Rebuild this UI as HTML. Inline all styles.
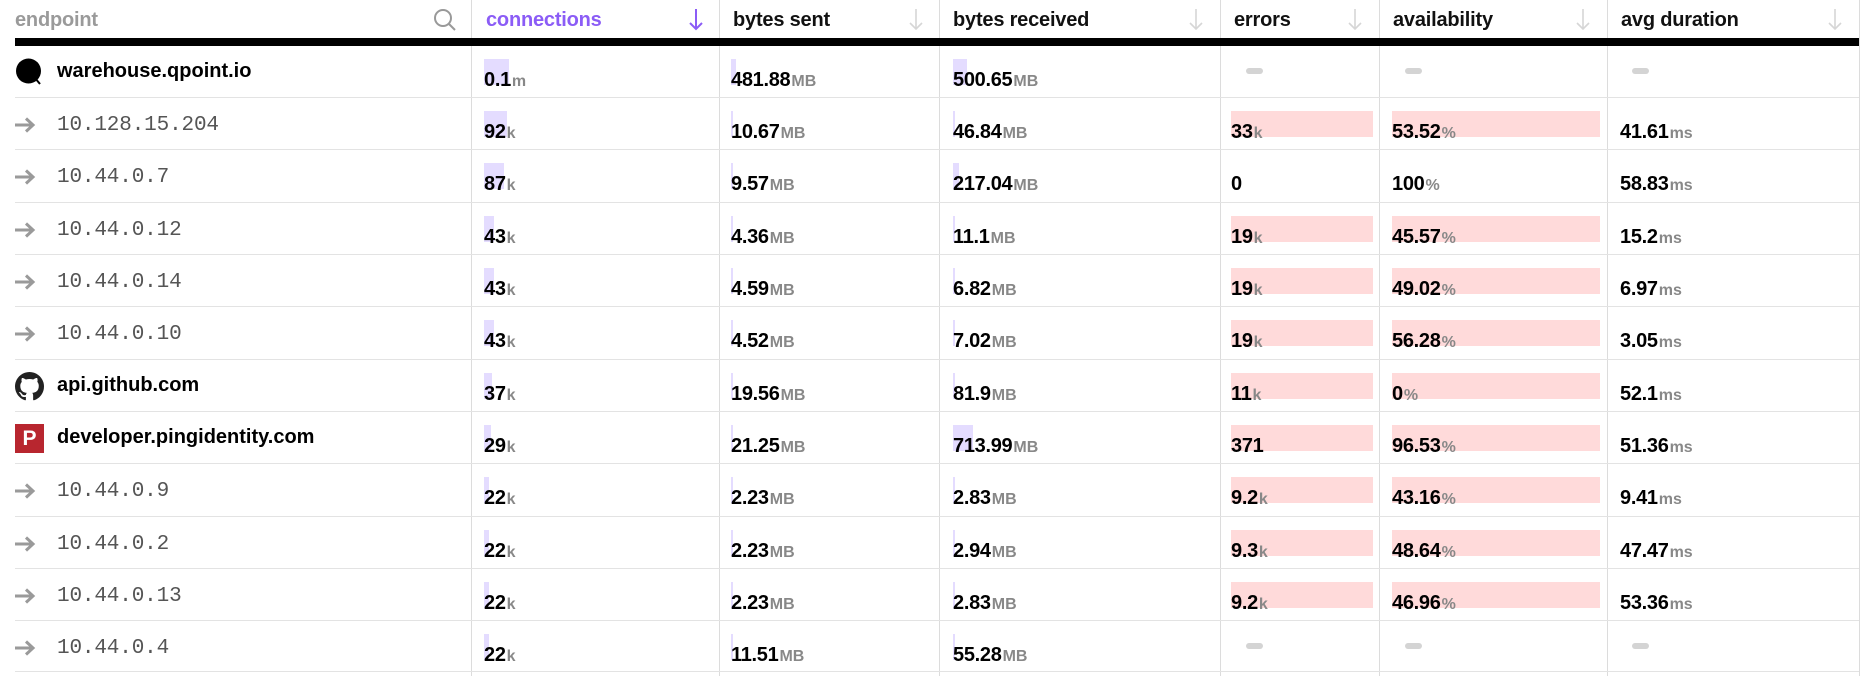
<!DOCTYPE html>
<html><head><meta charset="utf-8"><style>
*{margin:0;padding:0;box-sizing:border-box}
body{width:1866px;height:676px;background:#fff;position:relative;overflow:hidden;font-family:"Liberation Sans",sans-serif}
.vl{position:absolute;top:0;width:1px;height:676px;background:#dcdcdc}
.bar{position:absolute;left:15px;width:1844px;top:38px;height:8px;background:#000}
.hl{position:absolute;left:15px;width:1844px;height:1px;background:#e3e3e3}
.h{position:absolute;top:9px;font-size:20px;font-weight:bold;color:#111;letter-spacing:-0.2px}
.ar{position:absolute;top:7px;width:14px;height:24px}
.r{position:absolute;left:0;width:1866px;height:52px}
.c{position:absolute;top:23px;font-size:20px;font-weight:bold;color:#000;white-space:nowrap;letter-spacing:-0.3px}
.c i{font-style:normal;font-size:16px;color:#888;font-weight:bold;margin-left:1px;letter-spacing:0}
.b{position:absolute;top:13px;height:26px;background:#e4dcff}
.p{position:absolute;top:13px;height:26px;background:#ffdada}
.d{position:absolute;top:22px;width:17px;height:6px;border-radius:3px;background:#d4d4d4}
.n{position:absolute;left:57px;top:14px;font-size:20px;font-weight:bold;color:#000}
.ip{position:absolute;left:57px;top:16px;font-family:"Liberation Mono",monospace;font-size:21px;color:#555;letter-spacing:-0.15px}
.arw{position:absolute;left:14px;top:19px;width:22px;height:16px}
.ic{position:absolute;left:15px;top:12px;width:29px;height:29px}
</style></head><body>
<svg width="0" height="0" style="position:absolute"><defs><symbol id="a" viewBox="0 0 22 16"><path d="M1 8h18M12 1.5l7 6.5-7 6.5" fill="none" stroke="#9a9a9a" stroke-width="3"/></symbol></defs></svg>
<div class="vl" style="left:471px"></div><div class="vl" style="left:719px"></div><div class="vl" style="left:939px"></div><div class="vl" style="left:1220px"></div><div class="vl" style="left:1379px"></div><div class="vl" style="left:1607px"></div><div class="vl" style="left:1859px"></div>
<div class="h" style="left:15px;color:#9a9a9a">endpoint</div>
<svg style="position:absolute;left:433px;top:8px" width="24" height="24" viewBox="0 0 24 24" fill="none" stroke="#999" stroke-width="2"><circle cx="10" cy="10" r="8"/><path d="M16 16l6 6"/></svg>
<div class="h" style="left:486px;color:#8b5cf6">connections</div>
<svg class="ar" style="left:689px" viewBox="0 0 14 24" fill="none" stroke="#8b5cf6" stroke-width="2"><path d="M7 2v20M1 16l6 6 6-6"/></svg>
<div class="h" style="left:733px">bytes sent</div>
<svg class="ar" style="left:909px" viewBox="0 0 14 24" fill="none" stroke="#d6d6d6" stroke-width="1.6"><path d="M7 2v20M1 16l6 6 6-6"/></svg>
<div class="h" style="left:953px">bytes received</div>
<svg class="ar" style="left:1189px" viewBox="0 0 14 24" fill="none" stroke="#d6d6d6" stroke-width="1.6"><path d="M7 2v20M1 16l6 6 6-6"/></svg>
<div class="h" style="left:1234px">errors</div>
<svg class="ar" style="left:1348px" viewBox="0 0 14 24" fill="none" stroke="#d6d6d6" stroke-width="1.6"><path d="M7 2v20M1 16l6 6 6-6"/></svg>
<div class="h" style="left:1393px">availability</div>
<svg class="ar" style="left:1576px" viewBox="0 0 14 24" fill="none" stroke="#d6d6d6" stroke-width="1.6"><path d="M7 2v20M1 16l6 6 6-6"/></svg>
<div class="h" style="left:1621px">avg duration</div>
<svg class="ar" style="left:1828px" viewBox="0 0 14 24" fill="none" stroke="#d6d6d6" stroke-width="1.6"><path d="M7 2v20M1 16l6 6 6-6"/></svg>
<div class="bar"></div>

<div class="hl" style="top:97px"></div><div class="hl" style="top:149px"></div><div class="hl" style="top:202px"></div><div class="hl" style="top:254px"></div><div class="hl" style="top:306px"></div><div class="hl" style="top:359px"></div><div class="hl" style="top:411px"></div><div class="hl" style="top:463px"></div><div class="hl" style="top:516px"></div><div class="hl" style="top:568px"></div><div class="hl" style="top:620px"></div><div class="hl" style="top:671px"></div>

<div class="r" style="top:46px">
<svg class="ic" viewBox="0 0 29 29"><circle cx="13.5" cy="13" r="12.5" fill="#000"/><path d="M20 20l5 6" stroke="#000" stroke-width="2"/></svg>
<div class="n">warehouse.qpoint.io</div>
<div class="b" style="left:484px;width:25px"></div><div class="c" style="left:484px">0.1<i>m</i></div>
<div class="b" style="left:731px;width:5px"></div><div class="c" style="left:731px">481.88<i>MB</i></div>
<div class="b" style="left:953px;width:14px"></div><div class="c" style="left:953px">500.65<i>MB</i></div>
<div class="d" style="left:1246px"></div><div class="d" style="left:1405px"></div><div class="d" style="left:1632px"></div>
</div>
<div class="r" style="top:98px"><svg class="arw"><use href="#a"/></svg><div class="ip">10.128.15.204</div>
<div class="b" style="left:484px;width:23px"></div><div class="c" style="left:484px">92<i>k</i></div>
<div class="b" style="left:731px;width:2px"></div><div class="c" style="left:731px">10.67<i>MB</i></div>
<div class="b" style="left:953px;width:2px"></div><div class="c" style="left:953px">46.84<i>MB</i></div>
<div class="p" style="left:1231px;width:142px"></div><div class="c" style="left:1231px">33<i>k</i></div>
<div class="p" style="left:1392px;width:208px"></div><div class="c" style="left:1392px">53.52<i>%</i></div>
<div class="c" style="left:1620px">41.61<i>ms</i></div></div>
<div class="r" style="top:150px"><svg class="arw"><use href="#a"/></svg><div class="ip">10.44.0.7</div>
<div class="b" style="left:484px;width:20px"></div><div class="c" style="left:484px">87<i>k</i></div>
<div class="b" style="left:731px;width:2px"></div><div class="c" style="left:731px">9.57<i>MB</i></div>
<div class="b" style="left:953px;width:6px"></div><div class="c" style="left:953px">217.04<i>MB</i></div>
<div class="c" style="left:1231px">0</div>
<div class="c" style="left:1392px">100<i>%</i></div>
<div class="c" style="left:1620px">58.83<i>ms</i></div></div>
<div class="r" style="top:203px"><svg class="arw"><use href="#a"/></svg><div class="ip">10.44.0.12</div>
<div class="b" style="left:484px;width:10px"></div><div class="c" style="left:484px">43<i>k</i></div>
<div class="b" style="left:731px;width:2px"></div><div class="c" style="left:731px">4.36<i>MB</i></div>
<div class="b" style="left:953px;width:2px"></div><div class="c" style="left:953px">11.1<i>MB</i></div>
<div class="p" style="left:1231px;width:142px"></div><div class="c" style="left:1231px">19<i>k</i></div>
<div class="p" style="left:1392px;width:208px"></div><div class="c" style="left:1392px">45.57<i>%</i></div>
<div class="c" style="left:1620px">15.2<i>ms</i></div></div>
<div class="r" style="top:255px"><svg class="arw"><use href="#a"/></svg><div class="ip">10.44.0.14</div>
<div class="b" style="left:484px;width:10px"></div><div class="c" style="left:484px">43<i>k</i></div>
<div class="b" style="left:731px;width:2px"></div><div class="c" style="left:731px">4.59<i>MB</i></div>
<div class="b" style="left:953px;width:2px"></div><div class="c" style="left:953px">6.82<i>MB</i></div>
<div class="p" style="left:1231px;width:142px"></div><div class="c" style="left:1231px">19<i>k</i></div>
<div class="p" style="left:1392px;width:208px"></div><div class="c" style="left:1392px">49.02<i>%</i></div>
<div class="c" style="left:1620px">6.97<i>ms</i></div></div>
<div class="r" style="top:307px"><svg class="arw"><use href="#a"/></svg><div class="ip">10.44.0.10</div>
<div class="b" style="left:484px;width:10px"></div><div class="c" style="left:484px">43<i>k</i></div>
<div class="b" style="left:731px;width:2px"></div><div class="c" style="left:731px">4.52<i>MB</i></div>
<div class="b" style="left:953px;width:2px"></div><div class="c" style="left:953px">7.02<i>MB</i></div>
<div class="p" style="left:1231px;width:142px"></div><div class="c" style="left:1231px">19<i>k</i></div>
<div class="p" style="left:1392px;width:208px"></div><div class="c" style="left:1392px">56.28<i>%</i></div>
<div class="c" style="left:1620px">3.05<i>ms</i></div></div>
<div class="r" style="top:360px">
<svg class="ic" viewBox="0 0 16 16"><path fill="#222" d="M8 0C3.58 0 0 3.58 0 8c0 3.54 2.29 6.53 5.47 7.59.4.07.55-.17.55-.38 0-.19-.01-.82-.01-1.49-2.01.37-2.53-.49-2.69-.94-.09-.23-.48-.94-.82-1.13-.28-.15-.68-.52-.01-.53.63-.01 1.08.58 1.23.82.72 1.21 1.87.87 2.33.66.07-.52.28-.87.51-1.07-1.78-.2-3.64-.89-3.64-3.95 0-.87.31-1.59.82-2.15-.08-.2-.36-1.02.08-2.12 0 0 .67-.21 2.2.82.64-.18 1.32-.27 2-.27.68 0 1.36.09 2 .27 1.53-1.04 2.2-.82 2.2-.82.44 1.1.16 1.92.08 2.12.51.56.82 1.27.82 2.15 0 3.07-1.87 3.75-3.65 3.95.29.25.54.73.54 1.48 0 1.07-.01 1.93-.01 2.2 0 .21.15.46.55.38A8.013 8.013 0 0016 8c0-4.42-3.58-8-8-8z"/></svg>
<div class="n">api.github.com</div>
<div class="b" style="left:484px;width:8px"></div><div class="c" style="left:484px">37<i>k</i></div>
<div class="b" style="left:731px;width:2px"></div><div class="c" style="left:731px">19.56<i>MB</i></div>
<div class="b" style="left:953px;width:2px"></div><div class="c" style="left:953px">81.9<i>MB</i></div>
<div class="p" style="left:1231px;width:142px"></div><div class="c" style="left:1231px">11<i>k</i></div>
<div class="p" style="left:1392px;width:208px"></div><div class="c" style="left:1392px">0<i>%</i></div>
<div class="c" style="left:1620px">52.1<i>ms</i></div></div>
<div class="r" style="top:412px">
<div class="ic" style="background:#b8262f;color:#fff;font-weight:bold;font-size:21px;text-align:center;line-height:29px">P</div>
<div class="n">developer.pingidentity.com</div>
<div class="b" style="left:484px;width:7px"></div><div class="c" style="left:484px">29<i>k</i></div>
<div class="b" style="left:731px;width:2px"></div><div class="c" style="left:731px">21.25<i>MB</i></div>
<div class="b" style="left:953px;width:20px"></div><div class="c" style="left:953px">713.99<i>MB</i></div>
<div class="p" style="left:1231px;width:142px"></div><div class="c" style="left:1231px">371</div>
<div class="p" style="left:1392px;width:208px"></div><div class="c" style="left:1392px">96.53<i>%</i></div>
<div class="c" style="left:1620px">51.36<i>ms</i></div></div>
<div class="r" style="top:464px"><svg class="arw"><use href="#a"/></svg><div class="ip">10.44.0.9</div>
<div class="b" style="left:484px;width:5px"></div><div class="c" style="left:484px">22<i>k</i></div>
<div class="b" style="left:731px;width:2px"></div><div class="c" style="left:731px">2.23<i>MB</i></div>
<div class="b" style="left:953px;width:2px"></div><div class="c" style="left:953px">2.83<i>MB</i></div>
<div class="p" style="left:1231px;width:142px"></div><div class="c" style="left:1231px">9.2<i>k</i></div>
<div class="p" style="left:1392px;width:208px"></div><div class="c" style="left:1392px">43.16<i>%</i></div>
<div class="c" style="left:1620px">9.41<i>ms</i></div></div>
<div class="r" style="top:517px"><svg class="arw"><use href="#a"/></svg><div class="ip">10.44.0.2</div>
<div class="b" style="left:484px;width:5px"></div><div class="c" style="left:484px">22<i>k</i></div>
<div class="b" style="left:731px;width:2px"></div><div class="c" style="left:731px">2.23<i>MB</i></div>
<div class="b" style="left:953px;width:2px"></div><div class="c" style="left:953px">2.94<i>MB</i></div>
<div class="p" style="left:1231px;width:142px"></div><div class="c" style="left:1231px">9.3<i>k</i></div>
<div class="p" style="left:1392px;width:208px"></div><div class="c" style="left:1392px">48.64<i>%</i></div>
<div class="c" style="left:1620px">47.47<i>ms</i></div></div>
<div class="r" style="top:569px"><svg class="arw"><use href="#a"/></svg><div class="ip">10.44.0.13</div>
<div class="b" style="left:484px;width:5px"></div><div class="c" style="left:484px">22<i>k</i></div>
<div class="b" style="left:731px;width:2px"></div><div class="c" style="left:731px">2.23<i>MB</i></div>
<div class="b" style="left:953px;width:2px"></div><div class="c" style="left:953px">2.83<i>MB</i></div>
<div class="p" style="left:1231px;width:142px"></div><div class="c" style="left:1231px">9.2<i>k</i></div>
<div class="p" style="left:1392px;width:208px"></div><div class="c" style="left:1392px">46.96<i>%</i></div>
<div class="c" style="left:1620px">53.36<i>ms</i></div></div>
<div class="r" style="top:621px"><svg class="arw"><use href="#a"/></svg><div class="ip">10.44.0.4</div>
<div class="b" style="left:484px;width:5px"></div><div class="c" style="left:484px">22<i>k</i></div>
<div class="b" style="left:731px;width:2px"></div><div class="c" style="left:731px">11.51<i>MB</i></div>
<div class="b" style="left:953px;width:2px"></div><div class="c" style="left:953px">55.28<i>MB</i></div>
<div class="d" style="left:1246px"></div><div class="d" style="left:1405px"></div><div class="d" style="left:1632px"></div></div>
</body></html>
